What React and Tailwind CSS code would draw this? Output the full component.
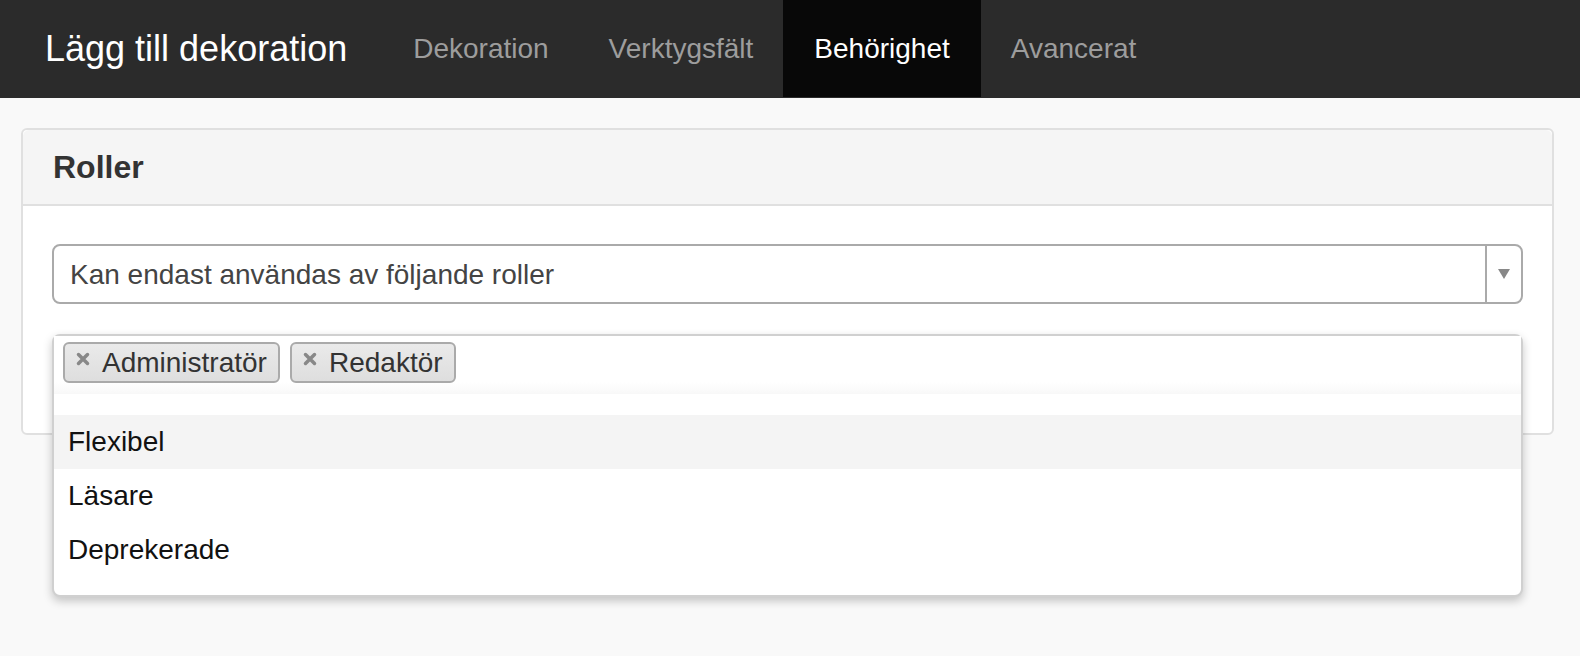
import React from "react";

const tabs = ["Dekoration", "Verktygsfält", "Behörighet", "Avancerat"];
const options = ["Flexibel", "Läsare", "Deprekerade"];
const tags = ["Administratör", "Redaktör"];

export default function App() {
  return (
    <div className="min-h-screen bg-[#f9f9f9] font-['Liberation_Sans',Arial,sans-serif]">
      <nav className="h-[98px] bg-[#2b2b2b] flex items-start">
        <div className="h-[97px] flex items-center pl-[45px] pr-[36px] text-[36px] text-white">
          Lägg till dekoration
        </div>
        {tabs.map((t) => (
          <div
            key={t}
            className={
              t === "Behörighet"
                ? "h-[97px] flex items-center px-[31px] text-[28px] bg-[#080808] text-white"
                : "h-[97px] flex items-center px-[30px] text-[28px] text-[#9d9d9d]"
            }
          >
            {t}
          </div>
        ))}
      </nav>

      <main className="pl-[21px] pr-[26px] pt-[30px]">
        <div className="bg-white border-2 border-[#e0e0e0] rounded-[6px]">
          <div className="h-[76px] bg-[#f5f5f5] border-b-2 border-[#e0e0e0] rounded-t-[6px] px-[30px] flex items-center">
            <h2 className="text-[32px] font-bold text-[#333]">Roller</h2>
          </div>
          <div className="px-[29px] pt-[38px] pb-[39px]">
            <div className="h-[60px] flex border-2 border-[#aaa] rounded-[8px] bg-white">
              <div className="flex-1 flex items-center pl-[16px] pt-[2px] text-[28px] text-[#444]">
                Kan endast användas av följande roller
              </div>
              <div className="w-[36px] border-l-2 border-[#aaa] flex items-center justify-center">
                <svg width="12" height="10" viewBox="0 0 12 10">
                  <path d="M0 0 H12 L6 10 Z" fill="#888" />
                </svg>
              </div>
            </div>

            <div className="relative h-[60px] mt-[30px]">
              <div className="absolute left-0 right-0 top-0 z-10 bg-white border-2 border-[#d0d0d0] rounded-[8px] shadow-[0_4px_10px_rgba(0,0,0,0.22)] pb-[18px]">
                <div className="h-[58px] flex items-start gap-[10px] pl-[9px] pt-[6px] bg-gradient-to-b from-white from-80% to-[#f8f8f8]">
                  {tags.map((t) => (
                    <span
                      key={t}
                      className="h-[41px] flex items-center gap-[12px] pl-[11px] pr-[11px] border-2 border-[#aaa] rounded-[6px] bg-gradient-to-b from-[#eaeaea] to-[#dedede] text-[28px] text-[#333]"
                    >
                      <svg width="14" height="14" viewBox="0 0 14 14" className="-mt-[8px]">
                        <path d="M2.5 2.5 L11.5 11.5 M11.5 2.5 L2.5 11.5" stroke="#888" strokeWidth="3.5" strokeLinecap="round" />
                      </svg>
                      {t}
                    </span>
                  ))}
                </div>
                <ul className="mt-[21px]">
                  {options.map((o, i) => (
                    <li
                      key={o}
                      className={
                        i === 0
                          ? "h-[54px] flex items-center pl-[14px] text-[28px] text-[#111] bg-[#f4f4f4]"
                          : "h-[54px] flex items-center pl-[14px] text-[28px] text-[#111]"
                      }
                    >
                      {o}
                    </li>
                  ))}
                </ul>
              </div>
            </div>
          </div>
        </div>
      </main>
    </div>
  );
}
